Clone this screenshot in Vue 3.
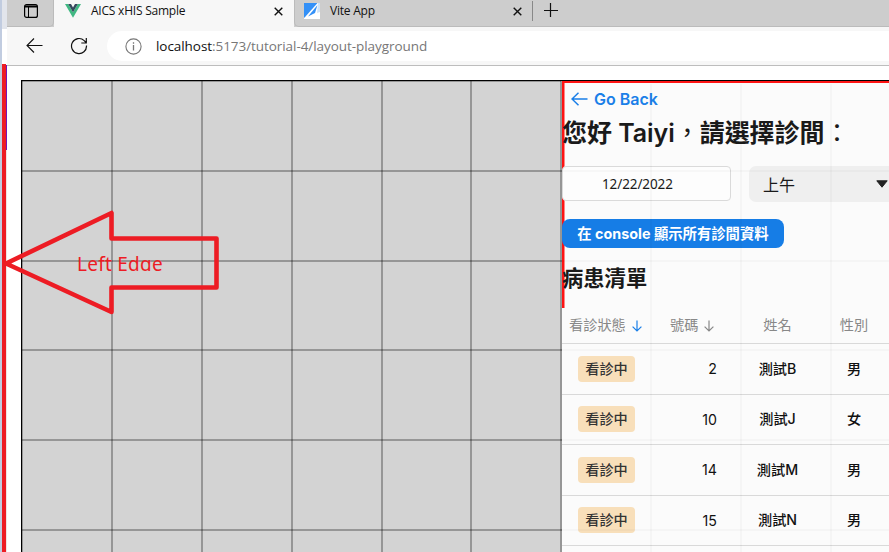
<script setup>
const cols = [22, 111, 201, 291, 381, 470, 560]
const rightCols = [650, 740, 830]
const rows = [170, 260, 349, 439, 529]
const patients = [
  { no: 2, name: '測試B', sex: '男' },
  { no: 10, name: '測試J', sex: '女' },
  { no: 14, name: '測試M', sex: '男' },
  { no: 15, name: '測試N', sex: '男' },
]
</script>

<template>
  <div class="window">
    <div class="edge"><i class="edge-top"></i></div>
    <div class="browser">
      <header class="tabs">
        <div class="tab-menu">
          <svg width="14" height="14" viewBox="0 0 14 14" fill="none" stroke="#000">
            <rect x=".6" y=".6" width="12.8" height="12.8" rx="2" stroke-width="1.2" />
            <path d="M1 2.500h12" stroke-width="2" /><path d="M4.500 3v10" />
          </svg>
        </div>
        <div class="tab active">
          <svg class="fav" width="16" height="14" viewBox="0 0 16 14"><path d="M0 0h3.200L8 8.300 12.800 0H16L8 13.800z" fill="#41b883" /><path d="M3.200 0H6l2 3.400L10 0h2.800L8 8.300z" fill="#35495e" /></svg>
          <span class="title">AICS xHIS Sample</span>
          <svg class="close" width="9" height="9" viewBox="0 0 9 9"><path d="M.7.7l7.600 7.600M8.300.7L.7 8.300" stroke="#111" stroke-width="1.4" /></svg>
        </div>
        <div class="tab second">
          <svg class="fav" width="16" height="16" viewBox="0 0 16 16"><path d="M0 0h16v16H0z" fill="#fff" /><path d="M0 0h13.500L1.500 13.500 0 15z" fill="#3390f7" /><path d="M13.500 2L11 10 4 13.500z" fill="#3390f7" /><path d="M14 0h2v9l-3 1z" fill="#cfe3f7" /></svg>
          <span class="title">Vite App</span>
          <svg class="close" width="9" height="9" viewBox="0 0 9 9"><path d="M.7.7l7.600 7.600M8.300.7L.7 8.300" stroke="#111" stroke-width="1.4" /></svg>
        </div>
        <div class="new-tab"><svg width="14" height="14" viewBox="0 0 14 14"><path d="M0 7.500h14M6.500 0v14" stroke="#111" stroke-width="1.2" /></svg></div>
      </header>
      <nav class="toolbar">
        <svg class="back" width="17" height="16" viewBox="0 0 17 16" fill="none" stroke="#111" stroke-width="1.1"><path d="M16.500 7.500H1M8 .5l-7 7 7 7" /></svg>
        <svg class="reload" width="18" height="18" viewBox="0 0 18 18" fill="none" stroke="#111" stroke-width="1.2"><path d="M16.500 8.500A7.500 7.500 0 1 1 14.200 3.600L16 5.500M16.300 1v5h-5" /></svg>
        <div class="address">
          <svg width="17" height="17" viewBox="0 0 17 17" fill="none" stroke="#777"><circle cx="8.500" cy="8.500" r="7.600" stroke-width="1.1" /><path d="M8.500 7v5.500M8.500 4.300v1.500" stroke-width="1.3" /></svg>
          <span class="url"><b>localhost</b>:5173/tutorial-4/layout-playground</span>
        </div>
      </nav>
      <main class="page">
        <div class="playground">
          <div class="blank"></div>
          <section class="panel">
            <a class="go"><svg width="17" height="14" viewBox="0 0 17 14" fill="none" stroke="#1a7fe8" stroke-width="1.500"><path d="M16.500 7H1M7.500 .7L1 7l6.500 6.300" /></svg><span>Go Back</span></a>
            <h1>您好 Taiyi<span class="comma">，</span>請選擇診間<span class="colon">：</span></h1>
            <div class="filters">
              <div class="date">12/22/2022</div>
              <div class="select"><span>上午</span><svg width="12" height="8" viewBox="0 0 12 8"><path d="M.8.8h10.400L6 7.200z" fill="#222" stroke="#222" stroke-linejoin="round" /></svg></div>
            </div>
            <button>在 console 顯示所有診間資料</button>
            <h2>病患清單</h2>
            <div class="thead">
              <span class="c1">看診狀態<svg width="10" height="12" viewBox="0 0 10 12" fill="none" stroke="#1a7fe8" stroke-width="1.200"><path d="M5 .5v10.500M.6 6.600L5 11l4.400-4.400" /></svg></span>
              <span class="c2">號碼<svg width="10" height="12" viewBox="0 0 10 12" fill="none" stroke="#888" stroke-width="1.200"><path d="M5 .5v10.500M.6 6.600L5 11l4.400-4.400" /></svg></span>
              <span class="c3">姓名</span><span class="c4">性別</span>
            </div>
            <div v-for="p in patients" :key="p.no" class="trow">
              <span class="c1"><em>看診中</em></span><span class="c2">{{ p.no }}</span><span class="c3">{{ p.name }}</span><span class="c4">{{ p.sex }}</span>
            </div>
          </section>
        </div>
      </main>
    </div>
    <svg class="overlay" width="889" height="552" viewBox="0 0 889 552">
      <g fill="#000" fill-opacity=".29" shape-rendering="crispEdges">
        <rect v-for="x in cols" :key="x" :x="x" y="81" :width="x === 22 ? 1 : 2" height="471" />
        <rect x="22" y="81" width="539" height="1" />
        <rect v-for="y in rows" :key="y" x="22" :y="y" width="540" height="2" />
      </g>
      <g fill="#000" fill-opacity=".024" shape-rendering="crispEdges">
        <rect v-for="x in rightCols" :key="x" :x="x" y="84" width="2" height="468" />
        <rect v-for="y in rows" :key="y" x="562" :y="y" width="327" height="2" />
      </g>
      <path d="M6 65h1v85H6z" fill="#7412b8" />
      <path d="M6 150h1v402H6z" fill="#eee4e4" />
      <path d="M2 64h4v488H2z" fill="#ed1c24" />
      <path d="M6 263.500L111.500 213v25.500h105v49h-105V312z" fill="none" stroke="#ed1c24" stroke-width="4.600" stroke-linejoin="round" />
    </svg>
    <div class="note">Left Edge</div>
  </div>
</template>

<style>
body { margin: 0; overflow: hidden; }
</style>
<style scoped>
* { box-sizing: border-box; }
.window { width: 889px; height: 552px; display: flex; position: relative; overflow: hidden; background: #fff; font-family: "Liberation Sans", "Noto Sans CJK TC", sans-serif; }
svg { display: block; flex: none; }
.edge { width: 7px; border-left: 2px solid #c1cce0; background: #fff; }
.edge-top { display: block; height: 29px; background: #e2e5ec; }
.browser { width: 882px; flex: none; display: flex; flex-direction: column; }
.tabs { height: 27px; display: flex; background: #cdcdcd; font: 12px "Open Sans", sans-serif; color: #111; }
.tab-menu { width: 47px; padding: 4px 0 0 17px; border-right: 1px solid #bbb; border-bottom: 1px solid #bbb; border-radius: 0 0 5px; }
.tab { display: flex; height: 27px; }
.tab .title { font-size: 12px; line-height: 16px; white-space: nowrap; letter-spacing: -.22px; }
.active { width: 240px; background: #f7f7f7; padding: 3px 11px 0 11px; }
.active .fav { margin-top: 1px; }
.active .title { margin-left: 10px; }
.tab .close { margin: 4px 0 0 auto; }
.second { width: 239px; padding: 3px 11px 0 9px; border-left: 1px solid #bbb; border-radius: 0 0 0 5px; border-bottom: 1px solid #bbb; }
.second .title { margin-left: 10px; }
.new-tab { flex: 1; padding: 3px 0 0 11px; display: flex; border-bottom: 1px solid #bbb; }
.new-tab::before { content: ""; width: 1px; height: 20px; margin: -2px 0 0 -12px; background: #888; }
.new-tab svg { margin-left: 11px; }
.toolbar { height: 39px; flex: none; display: flex; background: #f7f7f7; border-bottom: 1px solid #bdbdbd; }
.back { margin: 11px 0 0 19px; }
.reload { margin: 10px 0 0 27px; }
.address { flex: 1; margin: 4px 0 0 19px; height: 30px; background: #fff; border-radius: 15px 0 0 15px; display: flex; align-items: center; padding-left: 18px; }
.url { margin-left: 14px; font: 13.500px "Open Sans", sans-serif; color: #777; letter-spacing: -.06px; white-space: nowrap; }
.url b { font-weight: 400; color: #111; }
.page { flex: 1; padding: 14px 0 0 14px; }
.playground { height: 472px; border: 1px solid #000; border-width: 1px 0 0 1px; display: flex; background: #d3d3d3; }
.blank { width: 540px; flex: none; }
.panel { flex: 1; background: linear-gradient(#fe1313, #fe1313) 0 0 / 100% 2px no-repeat, linear-gradient(#fe1313, #fe1313) 0 0 / 2.500px 227px no-repeat, #fbfbfb; color: #1a1a1a; display: flex; flex-direction: column; align-items: stretch; font-family: Inter, "Noto Sans CJK TC", sans-serif; min-width: 0; overflow: hidden; }
.go { height: 20px; margin: 8px 0 0 9px; flex: none; display: flex; align-items: center; gap: 6px; color: #1a7fe8; font-size: 16px; font-weight: 600; }
h1 { margin: 6px 0 0; height: 36px; flex: none; font-size: 25px; line-height: 36px; font-weight: 600; white-space: nowrap; letter-spacing: -.05px; }
h1 .comma, h1 .colon { font-weight: 400; }
h1, h2 { font-family: Inter, "Noto Sans CJK TC", sans-serif; }
.filters { display: flex; gap: 18px; margin-top: 15px; flex: none; height: 35px; }
.date { width: 169px; flex: none; border: 1px solid #dadada; border-radius: 4px; background: #fdfdfd; padding-left: 39px; font: 13.500px/34px "Noto Sans", sans-serif; letter-spacing: -.1px; }
.select { width: 150px; height: 36px; flex: none; border-radius: 7px; background: #efefef; display: flex; align-items: center; justify-content: space-between; padding: 0 11px 0 14px; font-size: 16px; }
button { border: 0; width: 222px; height: 29px; flex: none; margin-top: 18px; padding: 0; border-radius: 8px; background: #167de6; color: #fff; font: 700 14.350px/29px Inter, "Noto Sans CJK TC", sans-serif; white-space: nowrap; }
h2 { margin: 15px 0 0; height: 30px; flex: none; font-size: 21.300px; line-height: 30px; font-weight: 600; }
.thead, .trow { display: grid; grid-template-columns: 90px 90px 71px 82px; flex: none; align-items: center; border-bottom: 1px solid #d9d9d9; }
.thead { height: 51px; padding-top: 11px; color: #888; font-size: 14.200px; }
.thead .c1, .thead .c2 { display: flex; align-items: center; gap: 6px; padding-left: 7px; }
.thead .c2 { padding-left: 18px; }
.thead svg { margin-top: 5px; }
.trow { height: 50.500px; font-size: 14.200px; color: #111; }
.trow .c3, .trow .c4 { font-weight: 500; padding-bottom: 2px; }
.trow .c1 { padding-left: 16px; }
em { display: block; width: 57px; height: 26px; line-height: 26px; border-radius: 4px; background: #f8dfba; font-style: normal; font-weight: 500; text-align: center; color: #333; }
.trow .c2 { text-align: right; padding-right: 25px; }
.c3 { text-align: center; }
.c4 { text-align: center; }
.overlay { position: absolute; left: 0; top: 0; pointer-events: none; }
.note { position: absolute; left: 77px; top: 251px; height: 20px; overflow: hidden; font: 19px/26px "Noto Sans", sans-serif; letter-spacing: .25px; color: #ed1c24; white-space: nowrap; }
</style>
